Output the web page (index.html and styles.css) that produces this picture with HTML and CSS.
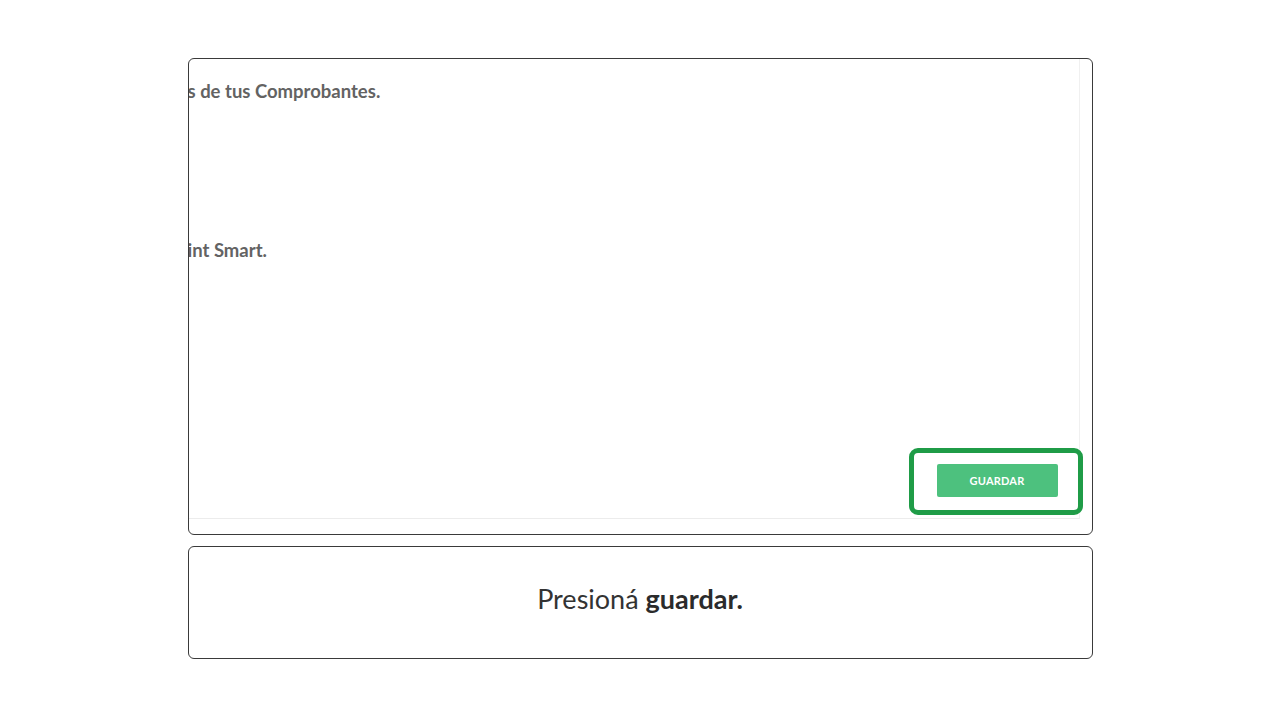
FILE: index.html
```html
<!DOCTYPE html>
<html lang="es">
<head>
<meta charset="utf-8">
<title>Guardar</title>
<link rel="stylesheet" href="styles.css">
</head>
<body>
<main class="stage">
  <section class="card shot">
    <div class="shot-inner">
      <div class="content">
        <p class="line line-1">s de tus Comprobantes.</p>
        <p class="line line-2">int Smart.</p>
        <div class="actions">
          <div class="highlight">
            <button class="btn" type="button">GUARDAR</button>
          </div>
        </div>
      </div>
    </div>
  </section>
  <section class="card caption">
    <p>Presioná <strong>guardar.</strong></p>
  </section>
</main>
</body>
</html>
```
FILE: styles.css
```css
* { box-sizing: border-box; }
html, body { margin: 0; padding: 0; background: #fff; }
body {
  width: 1280px;
  height: 720px;
  overflow: hidden;
  font-family: Lato, "Open Sans", sans-serif;
}
.stage {
  padding-top: 58px;
  display: flex;
  flex-direction: column;
  align-items: center;
  gap: 11px;
}
.card {
  width: 905px;
  border: 1.5px solid #3a3a3a;
  border-radius: 6px;
  background: #fff;
}
.shot {
  height: 477px;
  padding: 0 12px 15px 0;
  overflow: hidden;
}
.shot-inner {
  height: 100%;
  border-right: 1px solid #f0f0f0;
  border-bottom: 1px solid #ececec;
}
.content {
  height: 100%;
  display: flex;
  flex-direction: column;
}
.line {
  margin: 0;
  font-weight: 700;
  font-size: 18.5px;
  color: #636363;
  white-space: nowrap;
  margin-left: -1px;
}
.line-1 { margin-top: 21px; }
.line-2 { margin-top: 137px; }
.actions {
  margin-top: auto;
  display: flex;
  justify-content: flex-end;
  padding: 0 0 3px 0;
}
.highlight {
  width: 174px;
  height: 67px;
  border: 5px solid #1f9c47;
  border-radius: 9px;
  margin-right: -4px;
  display: flex;
  align-items: center;
  justify-content: center;
}
.btn {
  width: 121px;
  height: 33px;
  border: none;
  border-radius: 2px;
  background: #4dc17e;
  color: #fff;
  font-family: Lato, "Open Sans", sans-serif;
  font-weight: 700;
  font-size: 11px;
  letter-spacing: 0.2px;
  margin-left: 3px;
  margin-bottom: 3px;
}
.caption {
  height: 113px;
  display: flex;
  align-items: center;
  justify-content: center;
  padding-bottom: 8px;
}
.caption p {
  margin: 0;
  font-size: 27px;
  color: #333;
}
.caption strong { font-weight: 700; color: #2b2b2b; }
```
